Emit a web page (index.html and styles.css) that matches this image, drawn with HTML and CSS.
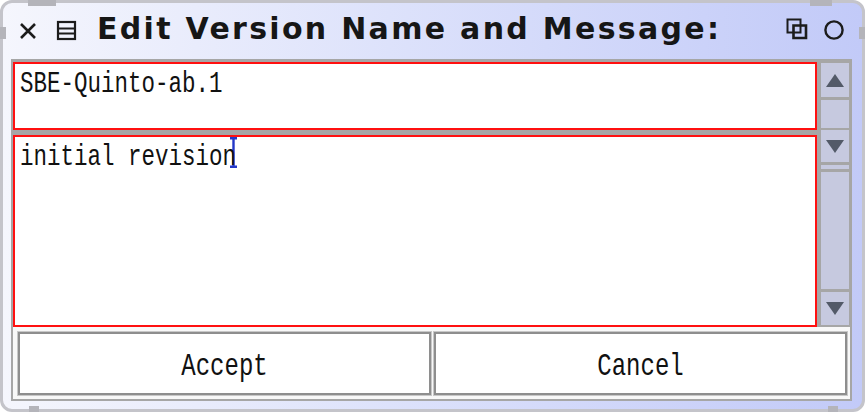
FILE: index.html
```html
<!DOCTYPE html>
<html>
  <head>
    <meta name="viewport" content="width=device-width, initial-scale=1.0">
    <title>Edit Version Name and Message</title>
    <link rel="stylesheet" href="styles.css">
  </head>
  <body>
    <div class="window">
      <header class="titlebar">
        <span class="tb-icon close">
          <svg width="18" height="18" viewBox="0 0 18 18"><path d="M2 2 L16 16 M16 2 L2 16" stroke="#1c1c1c" stroke-width="2.6" fill="none"/></svg>
        </span>
        <span class="tb-icon menu">
          <svg width="21" height="21" viewBox="0 0 21 21"><rect x="2" y="2" width="17" height="17" stroke="#1c1c1c" stroke-width="2.2" fill="none"/><path d="M2 8.5 H19 M2 13.5 H19" stroke="#1c1c1c" stroke-width="2" fill="none"/></svg>
        </span>
        <h1 class="title">Edit Version Name and Message:</h1>
        <span class="tb-icon collapse">
          <svg width="22" height="22" viewBox="0 0 22 22"><rect x="1.5" y="1.5" width="13" height="13" stroke="#1c1c1c" stroke-width="2" fill="none"/><path d="M7.5 7.5 H20 V20 H7.5 Z" stroke="#1c1c1c" stroke-width="2.6" fill="none"/></svg>
        </span>
        <span class="tb-icon expand">
          <svg width="22" height="22" viewBox="0 0 22 22"><circle cx="11" cy="11" r="8.6" stroke="#1c1c1c" stroke-width="2.4" fill="none"/></svg>
        </span>
      </header>

      <div class="panel">
        <div class="editors">
          <div class="fields">
            <div class="field name">
              <span class="txt">SBE-Quinto-ab.1</span>
            </div>
            <div class="field message">
              <span class="txt">initial revision</span>
              <svg class="caret" width="9" height="31" viewBox="0 0 9 31"><path d="M4.5 1 V30 M1 1.2 H8 M1 29.8 H8" stroke="#2438c8" stroke-width="2.4" fill="none"/></svg>
            </div>
          </div>
          <div class="scrollbar">
            <div class="sb-btn up"><span class="arrow-up"></span></div>
            <div class="sb-track small"></div>
            <div class="sb-btn down"><span class="arrow-down"></span></div>
            <div class="sb-thumb"></div>
            <div class="sb-track big"></div>
            <div class="sb-btn down last"><span class="arrow-down"></span></div>
          </div>
        </div>
        <div class="actions">
          <button class="action"><span class="txt">Accept</span></button>
          <button class="action"><span class="txt">Cancel</span></button>
        </div>
      </div>

      <span class="grip top-left"></span>
      <span class="grip left-side"></span>
      <span class="grip top-right"></span>
      <span class="grip right-side"></span>
      <span class="grip bottom-left"></span>
      <span class="grip bottom-right"></span>
    </div>
  </body>
</html>
```

FILE: styles.css
```css
body {
  margin: 0;
  padding: 0;
  background: #ffffff;
  width: 865px;
  height: 412px;
  overflow: hidden;
}
.window {
  position: relative;
  box-sizing: border-box;
  width: 865px;
  height: 412px;
  border: 3px solid #c4c4ca;
  border-radius: 12px;
  background: linear-gradient(to right, #f5f6fd 0%, #dde2fb 45%, #c2caf8 100%);
  padding: 0 10px 8px 8px;
  display: flex;
  flex-direction: column;
}
.titlebar {
  box-sizing: border-box;
  height: 56px;
  display: flex;
  align-items: center;
  padding: 0 0 6px 8px;
}
.tb-icon {
  display: flex;
  align-items: center;
}
.tb-icon.close {
  margin-top: 6px;
}
.tb-icon.menu {
  margin-left: 19px;
  margin-top: 4px;
}
.tb-icon.collapse {
  margin-left: auto;
  margin-top: 2px;
}
.tb-icon.expand {
  margin-left: 15px;
  margin-right: 7px;
  margin-top: 4px;
}
.title {
  margin: 0 0 0 20px;
  font-family: "DejaVu Sans", sans-serif;
  font-weight: bold;
  font-size: 30px;
  color: #161616;
  letter-spacing: 2.3px;
}
.panel {
  flex: 1;
  display: flex;
  flex-direction: column;
  border: 2px solid #a6a6a6;
  background: #a6a6a6;
}
.editors {
  display: flex;
  height: 266px;
}
.fields {
  flex: 1;
  display: flex;
  flex-direction: column;
  gap: 5px;
  padding-top: 1px;
}
.field {
  box-sizing: border-box;
  background: #ffffff;
  border: 2px solid #ff1010;
  padding: 0 5px;
  display: flex;
  align-items: flex-start;
}
.field.name {
  height: 68px;
}
.field.message {
  flex: 1;
}
.txt {
  display: inline-block;
  margin-top: 3px;
  font-family: "Liberation Mono", monospace;
  font-size: 22.5px;
  line-height: 26px;
  color: #111111;
  transform: scaleY(1.3);
  transform-origin: top left;
  white-space: pre;
}
.caret {
  margin-left: -7px;
}
.scrollbar {
  width: 33px;
  display: flex;
  flex-direction: column;
  padding: 2px 1px 0 4px;
  box-sizing: border-box;
}
.sb-btn, .sb-track, .sb-thumb {
  background: #c6c9df;
  display: flex;
  justify-content: center;
  align-items: center;
}
.sb-btn.up {
  height: 34px;
}
.sb-track.small {
  height: 28px;
  margin-top: 3px;
}
.sb-btn.down {
  height: 32px;
  margin-top: 2px;
}
.sb-thumb {
  height: 4px;
  margin-top: 3px;
}
.sb-track.big {
  height: 117px;
  margin-top: 3px;
}
.sb-btn.down.last {
  height: 33px;
  margin-top: 3px;
}
.arrow-up {
  width: 0;
  height: 0;
  border-left: 9px solid transparent;
  border-right: 9px solid transparent;
  border-bottom: 13px solid #535a68;
}
.arrow-down {
  width: 0;
  height: 0;
  border-left: 9px solid transparent;
  border-right: 9px solid transparent;
  border-top: 13px solid #535a68;
}
.actions {
  flex: 1;
  background: #f8f8f8;
  display: flex;
  gap: 3px;
  padding: 5px 3px 4px 5px;
}
.action {
  flex: 1;
  background: #ffffff;
  border: 2px solid #8e8e8e;
  box-shadow: 0 0 0 1px #c8c8c8;
  padding: 6px 0 0 0;
  cursor: pointer;
}
.action .txt {
  font-size: 24px;
  margin-top: 0;
  transform-origin: center;
}
.grip {
  position: absolute;
  background: #b4b4ba;
}
.grip.top-left {
  top: -3px;
  left: 25px;
  width: 28px;
  height: 6px;
}
.grip.left-side {
  top: 24px;
  left: -3px;
  width: 6px;
  height: 12px;
}
.grip.top-right {
  top: -3px;
  right: 30px;
  width: 22px;
  height: 6px;
}
.grip.right-side {
  top: 24px;
  right: -3px;
  width: 6px;
  height: 12px;
}
.grip.bottom-left {
  bottom: -3px;
  left: 26px;
  width: 10px;
  height: 6px;
}
.grip.bottom-right {
  bottom: -3px;
  right: 24px;
  width: 10px;
  height: 6px;
}
```
